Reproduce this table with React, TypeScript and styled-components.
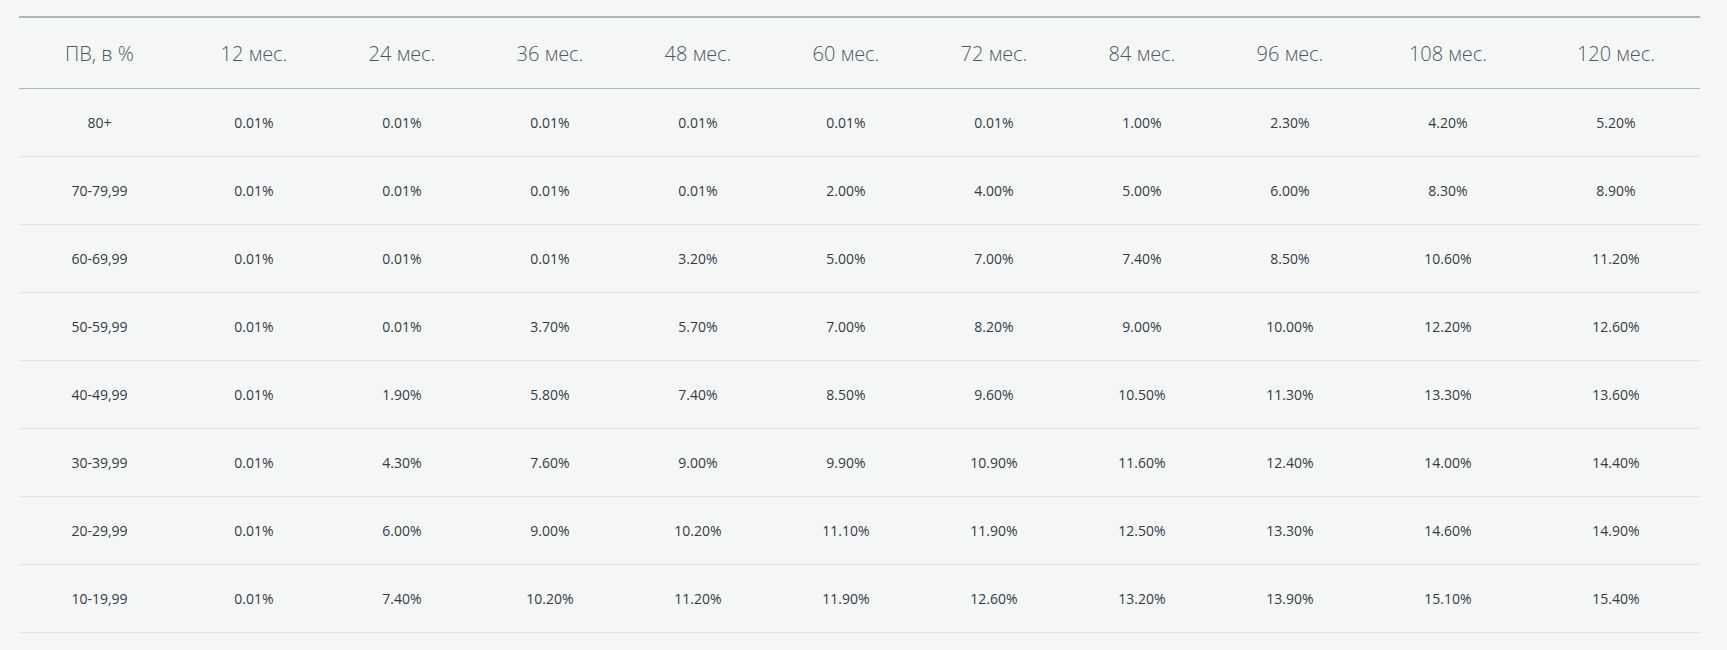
import styled, { createGlobalStyle } from "styled-components";

const GlobalStyle = createGlobalStyle`
  html, body {
    margin: 0;
    padding: 0;
    background: #f5f7f7;
  }
  body {
    font-family: "Open Sans", "Noto Sans", sans-serif;
  }
`;

const TERMS = [12, 24, 36, 48, 60, 72, 84, 96, 108, 120];

// column widths read off the reference, first column and the two last are wider
const COL_WIDTHS = [161, 148, 148, 148, 148, 148, 148, 148, 148, 168, 168];

const ROWS: [string, string[]][] = [
  ["80+", ["0.01%", "0.01%", "0.01%", "0.01%", "0.01%", "0.01%", "1.00%", "2.30%", "4.20%", "5.20%"]],
  ["70-79,99", ["0.01%", "0.01%", "0.01%", "0.01%", "2.00%", "4.00%", "5.00%", "6.00%", "8.30%", "8.90%"]],
  ["60-69,99", ["0.01%", "0.01%", "0.01%", "3.20%", "5.00%", "7.00%", "7.40%", "8.50%", "10.60%", "11.20%"]],
  ["50-59,99", ["0.01%", "0.01%", "3.70%", "5.70%", "7.00%", "8.20%", "9.00%", "10.00%", "12.20%", "12.60%"]],
  ["40-49,99", ["0.01%", "1.90%", "5.80%", "7.40%", "8.50%", "9.60%", "10.50%", "11.30%", "13.30%", "13.60%"]],
  ["30-39,99", ["0.01%", "4.30%", "7.60%", "9.00%", "9.90%", "10.90%", "11.60%", "12.40%", "14.00%", "14.40%"]],
  ["20-29,99", ["0.01%", "6.00%", "9.00%", "10.20%", "11.10%", "11.90%", "12.50%", "13.30%", "14.60%", "14.90%"]],
  ["10-19,99", ["0.01%", "7.40%", "10.20%", "11.20%", "11.90%", "12.60%", "13.20%", "13.90%", "15.10%", "15.40%"]],
];

export default function App() {
  return (
    <>
      <GlobalStyle />
      <Page>
        <RateTable>
          <colgroup>
            {COL_WIDTHS.map((w, i) => (
              <col key={i} style={{ width: w }} />
            ))}
          </colgroup>
          <thead>
            <tr>
              <HeadCell>ПВ, в %</HeadCell>
              {TERMS.map((t) => (
                <HeadCell key={t}>{t} мес.</HeadCell>
              ))}
            </tr>
          </thead>
          <tbody>
            {ROWS.map(([range, values]) => (
              <tr key={range}>
                <Cell>{range}</Cell>
                {values.map((v, i) => (
                  <Cell key={i}>{v}</Cell>
                ))}
              </tr>
            ))}
          </tbody>
        </RateTable>
      </Page>
    </>
  );
}

const Page = styled.div`
  padding: 16px 27px 18px 19px;
`;

const RateTable = styled.table`
  width: 1681px;
  table-layout: fixed;
  border-collapse: separate;
  border-spacing: 0;
`;

const HeadCell = styled.th`
  height: 70px;
  padding: 0;
  border-top: 2px solid #a9b6bc;
  border-bottom: 1px solid #a9b6bc;
  font-size: 20px;
  font-weight: 300;
  color: #4d5761;
  text-align: center;
  white-space: nowrap;
  vertical-align: middle;
`;

const Cell = styled.td`
  height: 67px;
  padding: 0;
  border-bottom: 1px solid #e1e4e4;
  font-size: 14px;
  color: #333b44;
  text-align: center;
  white-space: nowrap;
  vertical-align: middle;
`;
